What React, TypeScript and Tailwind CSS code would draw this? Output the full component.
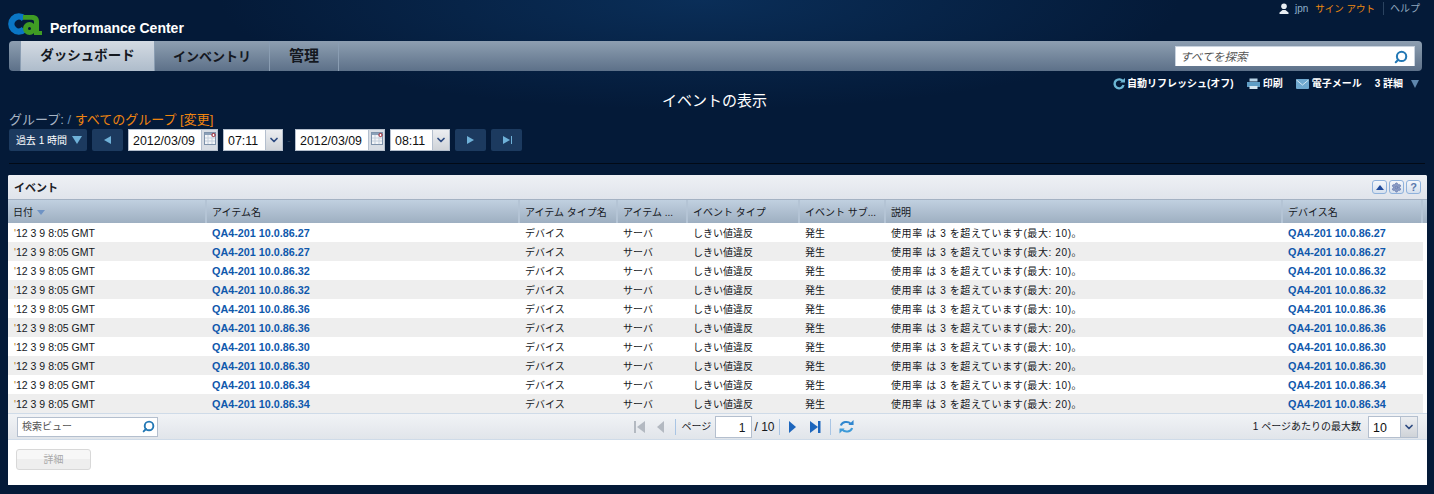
import React from "react";
import { ChevronDown, Search, Settings } from "lucide-react";

const font = "font-['Liberation_Sans','Noto_Sans_CJK_JP',sans-serif]";

const columns = [
  { label: "日付", width: "w-[199px]" },
  { label: "アイテム名", width: "w-[313px]" },
  { label: "アイテム タイプ名", width: "w-[98px]" },
  { label: "アイテム ...", width: "w-[70px]" },
  { label: "イベント タイプ", width: "w-[112px]" },
  { label: "イベント サブ...", width: "w-[86px]" },
  { label: "説明", width: "w-[397px]" },
  { label: "デバイス名", width: "w-[140px]" },
];

const rows = [27, 27, 32, 32, 36, 36, 30, 30, 34, 34].map((ip, i) => ({
  device: `QA4-201 10.0.86.${ip}`,
  max: i % 2 === 0 ? 10 : 20,
}));

function CaLogo() {
  return (
    <svg width="34" height="22" viewBox="0 0 34 22" className="shrink-0">
      <path d="M16 5.500A7.500 7.500 0 1 0 16 16.500" fill="none" stroke="#0a76c4" strokeWidth="6.500" />
      <circle cx="21.500" cy="15.500" r="4" fill="none" stroke="#3f9c24" strokeWidth="5" />
      <path d="M15 2h9c5 0 7 2.500 7 6.500V18h3v4h-8V9c0-1.500-.7-2.200-2.500-2.200H15z" fill="#3f9c24" />
    </svg>
  );
}

function NavTab({ label, active, width, size }: { label: string; active?: boolean; width: string; size: string }) {
  return (
    <div
      className={`${width} ${size} flex h-full items-center justify-center border-r border-[#8a9db2] pt-[1px] font-bold text-[#14181f] ${
        active
          ? "bg-gradient-to-b from-[#d4dbe3] to-[#aebccb]"
          : "bg-gradient-to-b from-[#8e9fb1] to-[#5d7189]"
      }`}
    >
      {label}
    </div>
  );
}

function ToolLink({ icon, label }: { icon: React.ReactNode; label: string }) {
  return (
    <span className="flex items-center gap-[2px] text-[10px] font-bold text-white">
      {icon}
      {label}
    </span>
  );
}

function StepButton({ dir, end }: { dir: "left" | "right"; end?: boolean }) {
  return (
    <div className="flex h-[22px] w-[31px] items-center justify-center rounded-[2px] bg-[#1c3a5f]">
      <svg width="12" height="12" viewBox="0 0 12 12">
        {dir === "left" ? (
          <path d="M9 2v8L2 6z" fill="#6fb1d8" />
        ) : (
          <path d="M2 2v8l7-4z" fill="#6fb1d8" />
        )}
        {end && <rect x="10" y="2" width="1" height="8" fill="#6fb1d8" />}
      </svg>
    </div>
  );
}

function CalendarIcon() {
  return (
    <svg width="12" height="13" viewBox="0 0 12 13">
      <rect x="0.5" y="0.5" width="11" height="12" fill="#f3f5f8" stroke="#7f93ab" />
      <rect x="1" y="1" width="10" height="2" fill="#8ba0b8" />
      <path d="M1 6h10M1 9h10M4 3v9M8 3v9" stroke="#c4cfdc" />
      <circle cx="9.5" cy="3" r="1.6" fill="#fff" stroke="#a01c28" />
    </svg>
  );
}

function DateInput() {
  return (
    <div className="flex h-[22px] w-[90px] border border-[#b4bfce] bg-white">
      <span className="flex-1 pl-[4px] text-[12.4px] leading-[22px] text-[#101010]">2012/03/09</span>
      <span className="flex w-[16px] justify-center border-l border-[#b4bfce] bg-[#d8dde4] pt-[2px]">
        <CalendarIcon />
      </span>
    </div>
  );
}

function DropBox({ value, outer }: { value: string; outer: string }) {
  return (
    <div className={`${outer} flex h-[22px] border border-[#b4bfce] bg-white`}>
      <span className="flex-1 pl-[4px] text-[12.4px] leading-[22px] text-[#101010]">{value}</span>
      <span className="flex w-[17px] items-center justify-center border-l border-[#b4bfce] bg-gradient-to-b from-[#eceef1] to-[#cfd3d8]">
        <ChevronDown size={12} strokeWidth={3.5} className="text-[#2c4a80]" />
      </span>
    </div>
  );
}

function PanelButton({ children }: { children: React.ReactNode }) {
  return (
    <span className="flex h-[14px] w-[15px] items-center justify-center rounded-[3px] border border-[#8fb2dc] bg-gradient-to-b from-[#f4f7fb] to-[#d5e0ee]">
      {children}
    </span>
  );
}

function Pager() {
  return (
    <div className="flex items-center text-[10px] text-[#15181d]">
      <svg width="34" height="14" viewBox="0 0 34 14" className="mr-[7px]">
        <rect x="0" y="1" width="2" height="12" fill="#b3b9c1" />
        <path d="M11 1v12L3 7z" fill="#b3b9c1" />
        <path d="M30 1v12l-7-6z" fill="#b3b9c1" />
      </svg>
      <span className="h-[16px] w-px bg-[#a9c5e4]" />
      <span className="ml-[6px] mr-[4px] w-[29px] whitespace-nowrap">ページ</span>
      <span className="h-[22px] w-[37px] border border-[#b4bfce] bg-white pr-[5px] text-right text-[12px] leading-[22px]">
        1
      </span>
      <span className="ml-[3px] mr-[4px] w-[20px] whitespace-nowrap text-[12px]">/ 10</span>
      <span className="h-[16px] w-px bg-[#a9c5e4]" />
      <svg width="40" height="14" viewBox="0 0 40 14" className="mx-[5px]">
        <path d="M4 1v12l7-6z" fill="#1d66bd" />
        <path d="M25 1v12l8-6z" fill="#1d66bd" />
        <rect x="33" y="1" width="2.500" height="12" fill="#1d66bd" />
      </svg>
      <span className="h-[16px] w-px bg-[#a9c5e4]" />
      <svg width="15" height="15" viewBox="0 0 16 16" className="ml-[8px]" fill="none">
        <path d="M2 7a6 5 0 0 1 10.500-2" stroke="#2f86cf" strokeWidth="2.200" />
        <path d="M10 6.500h5.500V1z" fill="#2f86cf" />
        <path d="M14 9.500a6 5 0 0 1-10.500 2" stroke="#3d9ad8" strokeWidth="2.200" />
        <path d="M6 10H.5v5.500z" fill="#3d9ad8" />
      </svg>
    </div>
  );
}

export default function App() {
  return (
    <div
      className={`${font} h-[494px] w-[1434px] overflow-hidden bg-[#041a38] bg-[radial-gradient(ellipse_480px_110px_at_700px_0px,#0a2e58,#041a38)] text-[#15181d]`}
    >
      {/* Header */}
      <header className="relative h-[41px]">
        <div className="flex items-end gap-[8px] pl-[8px] pt-[13px]">
          <CaLogo />
          <span className="text-[14px] leading-[14px] font-bold text-white">Performance Center</span>
        </div>
        <div className="absolute right-[14px] top-[2px] flex items-center text-[10px] leading-[13px]">
          <svg width="12" height="12" viewBox="0 0 12 12" className="mr-[5px]">
            <circle cx="6" cy="3.200" r="2.800" fill="#e8edf2" />
            <path d="M1.500 11V9.500L4.500 7h3l3 2.500V11z" fill="#e8edf2" />
          </svg>
          <span className="mr-[7px] text-[#8fb0cc]">jpn</span>
          <span className="mr-[8px] text-[9.5px] text-[#f08a10]">サイン アウト</span>
          <span className="border-l border-[#2b4360] pl-[6px] text-[#8fa6bd]">ヘルプ</span>
        </div>
      </header>

      {/* Main nav */}
      <nav className="mx-[9px] flex h-[30px] w-[1413px] items-center overflow-hidden rounded-[4px] bg-gradient-to-b from-[#8e9fb1] to-[#5d7189]">
        <span className="h-full w-[12px] border-r border-[#8a9db2]" />
        <NavTab label="ダッシュボード" width="w-[134px]" size="text-[13.500px]" active />
        <NavTab label="インベントリ" width="w-[115px]" size="text-[13px]" />
        <NavTab label="管理" width="w-[69px]" size="text-[15px]" />
        <div className="ml-auto mr-[7px] flex h-[20px] w-[240px] items-center justify-between border border-[#c9d3df] border-b-0 bg-white pl-[4px] pr-[6px]">
          <span className="pt-[2px] text-[11.500px] italic text-[#555]">すべてを探索</span>
          <Search size={14} strokeWidth={3.500} className="-scale-x-100 text-[#2378b5]" />
        </div>
      </nav>

      {/* Page tools */}
      <div className="flex h-[21px] items-center justify-end gap-[13px] pr-[15px] pt-[4px]">
        <ToolLink
          icon={
            <svg width="12" height="12" viewBox="0 0 12 12" fill="none">
              <path d="M10 3.500a4.500 4.500 0 1 0 .5 3.500" stroke="#6cb6d4" strokeWidth="2.400" />
              <path d="M7 4.500h5V0z" fill="#6cb6d4" />
            </svg>
          }
          label="自動リフレッシュ(オフ)"
        />
        <ToolLink
          icon={
            <svg width="13" height="12" viewBox="0 0 13 12" className="mr-[1px]">
              <rect x="2.500" y="0.500" width="8" height="3" fill="#b7d3e6" />
              <rect x="0" y="4" width="13" height="5" fill="#5f9dc5" />
              <rect x="2.500" y="8" width="8" height="3" fill="#d6e6f0" />
            </svg>
          }
          label="印刷"
        />
        <ToolLink
          icon={
            <svg width="13" height="10" viewBox="0 0 13 10" className="mr-[1px]">
              <rect width="13" height="10" rx="1" fill="#6fa8cf" />
              <path d="M0.500 1l6 5 6-5" fill="none" stroke="#d3e6f2" />
            </svg>
          }
          label="電子メール"
        />
        <span className="flex items-center gap-[3px] text-[10px] font-bold text-white">
          3 詳細
          <svg width="8" height="8" viewBox="0 0 10 8" className="ml-[5px]" preserveAspectRatio="none">
            <path d="M0 0h10L5 8z" fill="#5f87ad" />
          </svg>
        </span>
      </div>

      <h1 className="h-[18px] pr-[5px] text-center text-[15px] leading-[18px] font-normal text-white">イベントの表示</h1>

      <div className="mt-[2px] h-[15px] pl-[9px] text-[13px] leading-[15px] text-[#a7b4c4]">
        グループ: <span className="text-[#6d93b8]">/</span>{" "}
        <span className="text-[#ee8410]">すべてのグループ [変更]</span>
      </div>

      {/* Time range */}
      <div className="mt-[2px] flex h-[22px] items-center pl-[9px]">
        <div className="mr-[5px] flex h-[22px] w-[78px] items-center justify-end gap-[5px] rounded-[2px] bg-[#1c3a5f] pr-[5px] text-[10px] text-white">
          過去 1 時間
          <svg width="10" height="8" viewBox="0 0 10 8">
            <path d="M0 0h10L5 8z" fill="#6fb1d8" />
          </svg>
        </div>
        <StepButton dir="left" />
        <span className="w-[5px]" />
        <DateInput />
        <span className="w-[5px]" />
        <DropBox value="07:11" outer="w-[60px]" />
        <span className="flex w-[12px] justify-center text-[10px] text-[#2b3f57]">-</span>
        <DateInput />
        <span className="w-[5px]" />
        <DropBox value="08:11" outer="w-[60px]" />
        <span className="w-[5px]" />
        <StepButton dir="right" />
        <span className="w-[5px]" />
        <StepButton dir="right" end />
      </div>

      <div className="mx-[9px] mt-[12px] h-px bg-[#020a16]" />

      {/* Events panel */}
      <section className="ml-[8px] mt-[11px] h-[310px] w-[1419px] overflow-hidden rounded-t-[2px] bg-white">
        <div className="flex h-[25px] items-center justify-between border-b border-[#a4b2c3] bg-gradient-to-b from-[#eef0f5] to-[#e0e4eb] pl-[6px] pr-[6px]">
          <span className="pt-[2px] text-[11px] font-bold text-[#1c2026]">イベント</span>
          <span className="flex gap-[2px]">
            <PanelButton>
              <svg width="8" height="5" viewBox="0 0 8 5">
                <path d="M0 5h8L4 0z" fill="#1f4a9c" />
              </svg>
            </PanelButton>
            <PanelButton>
              <Settings size={11} fill="#8d9dc4" strokeWidth={2} className="text-[#6d82b5]" />
            </PanelButton>
            <PanelButton>
              <span className="text-[11px] leading-none font-bold text-[#5a78ac]">?</span>
            </PanelButton>
          </span>
        </div>

        <div className="flex h-[23px] bg-gradient-to-b from-[#c0d0e0] to-[#9eafc1] text-[10px] text-[#15181d]">
          {columns.map((col, i) => (
            <div
              key={col.label}
              className={`${col.width} flex h-full items-center gap-[4px] border-r-2 border-[#b4c4d5] pl-[5px] pt-[1px]`}
            >
              {col.label}
              {i === 0 && (
                <svg width="8" height="5" viewBox="0 0 8 5">
                  <path d="M0 0h8L4 5z" fill="#6f93c4" />
                </svg>
              )}
            </div>
          ))}
        </div>

        {rows.map((row, i) => (
          <div
            key={i}
            className={`flex h-[19px] w-[1415px] items-center pt-[1px] text-[10px] text-[#15181d] ${
              i % 2 === 1 ? "bg-[#eeeeee]" : "bg-white"
            }`}
          >
            <div className="w-[199px] pl-[6px] pt-[1px] text-[10.500px]">
              <span className="text-[#b8791e]">'</span>12 3 9 8:05 GMT
            </div>
            <div className="w-[313px] pl-[5px] text-[10.800px] font-bold text-[#0f58ac]">{row.device}</div>
            <div className="w-[98px] pl-[5px]">デバイス</div>
            <div className="w-[70px] pl-[5px]">サーバ</div>
            <div className="w-[112px] pl-[5px]">しきい値違反</div>
            <div className="w-[86px] pl-[5px]">発生</div>
            <div className="w-[397px] pl-[5px] tracking-[0.6px]">使用率 は 3 を超えています(最大: {row.max})。</div>
            <div className="w-[140px] pl-[5px] text-[10.800px] font-bold text-[#0f58ac]">{row.device}</div>
          </div>
        ))}

        {/* Footer */}
        <div className="grid h-[27px] grid-cols-3 items-center border-y border-[#cfdbe8] bg-gradient-to-b from-[#f1f3f6] to-[#e1e5ea]">
          <div className="ml-[9px] flex h-[20px] w-[141px] items-center justify-between border border-[#b4bfce] bg-white pl-[4px] pr-[2px] text-[10px] text-[#555]">
            検索ビュー
            <Search size={13} strokeWidth={3.500} className="-scale-x-100 text-[#2378b5]" />
          </div>
          <div className="flex justify-center pl-[52px]">
            <Pager />
          </div>
          <div className="flex items-center justify-end gap-[7px] pr-[9px] text-[10px]">
            1 ページあたりの最大数
            <DropBox value="10" outer="w-[50px]" />
          </div>
        </div>

        <div className="flex h-[45px] items-start pl-[8px] pt-[9px]">
          <button className="h-[21px] w-[75px] rounded-[3px] border border-[#d8d8d8] bg-[linear-gradient(#f7f7f7_50%,#eeeeee_50%)] text-[10px] text-[#a8a8a8]">
            詳細
          </button>
        </div>
      </section>
    </div>
  );
}
